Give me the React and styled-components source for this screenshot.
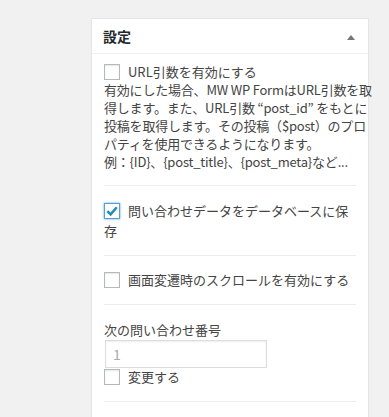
import styled, { createGlobalStyle, css } from "styled-components";

const GlobalStyle = createGlobalStyle`
  body {
    margin: 0;
    background: #f1f1f1;
    font-family: "Noto Sans CJK JP", "Noto Sans", sans-serif;
    color: #444;
  }
`;

const Page = styled.div`
  padding: 18px 0 0 91px;
`;

const Panel = styled.div`
  width: 278px;
  min-height: 399px;
  box-sizing: border-box;
  background: #fff;
  border: 1px solid #e5e5e5;
  border-bottom: none;
  box-shadow: 0 1px 1px rgba(0, 0, 0, 0.04);
`;

const Header = styled.div`
  display: flex;
  align-items: center;
  justify-content: space-between;
  height: 34px;
  padding: 0 13px 0 11px;
  border-bottom: 1px solid #eee;
`;

const Title = styled.h2`
  margin: 0;
  font-size: 14px;
  font-weight: 700;
  color: #23282d;
`;

const Arrow = styled.span`
  width: 0;
  height: 0;
  margin-top: 2px;
  border-left: 4px solid transparent;
  border-right: 4px solid transparent;
  border-bottom: 5px solid #72777c;
`;

const Inside = styled.div`
  padding: 0 12px;
`;

const Section = styled.div`
  padding: ${(p) => p.$pad || "14px 0"};
  border-bottom: 1px solid #eee;
  font-size: 13px;
  line-height: ${(p) => p.$lh || "20px"};
`;

const Row = styled.div`
  white-space: nowrap;
  line-height: ${(p) => p.$lh || "inherit"};
`;

const Box = styled.span`
  display: inline-block;
  width: 16px;
  height: 16px;
  box-sizing: border-box;
  margin-right: 8px;
  vertical-align: -3px;
  background: #fff;
  border: 1px solid #b4b9be;
  box-shadow: inset 0 1px 2px rgba(0, 0, 0, 0.1);
  ${(p) =>
    p.$checked &&
    css`
      border-color: #5b9dd9;
      box-shadow: 0 0 2px rgba(30, 140, 190, 0.8);
    `}
  svg {
    display: block;
  }
`;

const Desc = styled.p`
  margin: 0;
  white-space: nowrap;
  line-height: 18px;
  letter-spacing: -0.2px;
`;

const NumberInput = styled.input`
  display: block;
  width: 162px;
  height: 28px;
  box-sizing: border-box;
  margin: 0 0 0 1px;
  padding: 0 7px;
  border: 1px solid #ddd;
  box-shadow: inset 0 1px 2px rgba(0, 0, 0, 0.07);
  font-family: "Noto Sans CJK JP", sans-serif;
  font-size: 14px;
  color: #aaa;
  background: #fff;
  outline: none;
  &::placeholder {
    color: #aaa;
  }
`;

const Checkbox = ({ checked }) => (
  <Box $checked={checked}>
    {checked && (
      <svg width="14" height="14" viewBox="0 0 14 14">
        <path
          d="M2.3 7.2 L5.6 10.4 L11.8 3.2"
          fill="none"
          stroke="#1e8cbe"
          strokeWidth="2.4"
        />
      </svg>
    )}
  </Box>
);

export default function App() {
  return (
    <>
      <GlobalStyle />
      <Page>
        <Panel>
          <Header>
            <Title>設定</Title>
            <Arrow />
          </Header>
          <Inside>
            <Section $pad="9px 0 14px" $lh="18px">
              <Row>
                <Checkbox />
                URL引数を有効にする
              </Row>
              <Desc>
                有効にした場合、MW WP FormはURL引数を取
                <br />
                得します。また、URL引数 “post_id” をもとに
                <br />
                投稿を取得します。その投稿（$post）のプロ
                <br />
                パティを使用できるようになります。
                <br />
                例：{"{ID}"}、{"{post_title}"}、{"{post_meta}"}など...
              </Desc>
            </Section>
            <Section $pad="15px 0 14px">
              <Row>
                <Checkbox checked />
                問い合わせデータをデータベースに保
                <br />存
              </Row>
            </Section>
            <Section>
              <Row>
                <Checkbox />
                画面変遷時のスクロールを有効にする
              </Row>
            </Section>
            <Section $pad="15px 0 15px">
              <Row>次の問い合わせ番号</Row>
              <NumberInput type="text" placeholder="1" readOnly />
              <Row $lh="18px">
                <Checkbox />
                変更する
              </Row>
            </Section>
          </Inside>
        </Panel>
      </Page>
    </>
  );
}
